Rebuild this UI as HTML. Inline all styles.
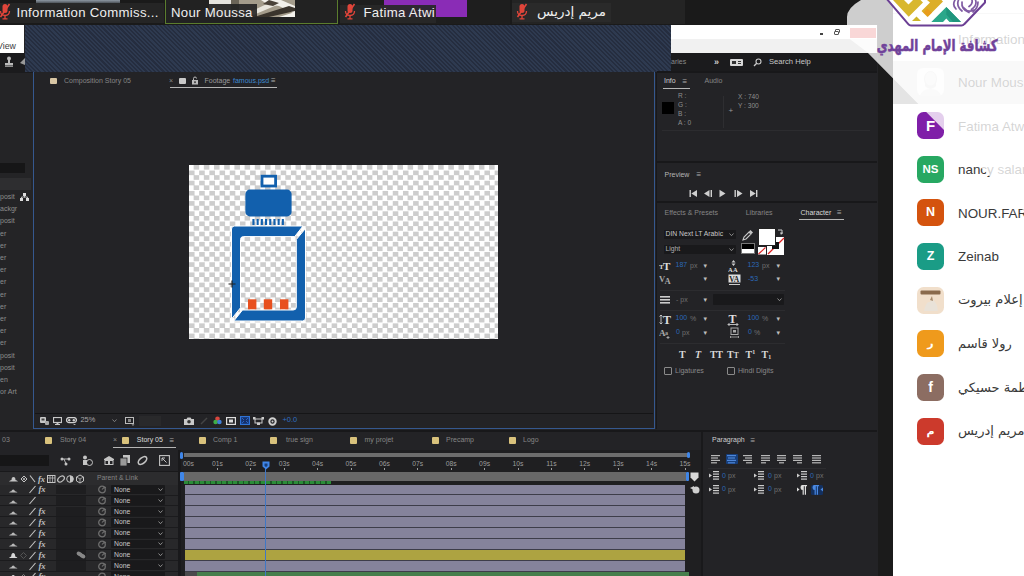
<!DOCTYPE html>
<html><head><meta charset="utf-8"><title>screen</title>
<style>
*{margin:0;padding:0;box-sizing:border-box}
html,body{width:1024px;height:576px;overflow:hidden;background:#232326;font-family:"Liberation Sans","DejaVu Sans",sans-serif}
.a{position:absolute;display:block}
.t{position:absolute;white-space:nowrap;line-height:1.15}
svg{overflow:hidden}
#root{position:relative;width:1024px;height:576px;overflow:hidden;background:#232326}
</style></head><body>
<div id="root">
<div class="a" style="left:0px;top:0px;width:1024px;height:25px;background:#1a1a1a;"></div>
<div class="a" style="left:36px;top:0px;width:84px;height:8px;background:linear-gradient(#8e99a4,#4a4f55 40%,#2a2a2b);"></div>
<div class="a" style="left:0px;top:2.5px;width:164px;height:20px;background:rgba(38,38,38,.92);"></div>
<div class="t" style="left:16.5px;top:5.11px;font-size:13.2px;color:#efefef;letter-spacing:.3px">Information Commiss...</div>
<div class="a" style="left:165px;top:-2px;width:172.5px;height:25.5px;background:#222;border:1.6px solid #5b7d2e"></div>
<svg class="a" style="left:208.5px;top:0" width="86" height="17" viewBox="0 0 86 17"><rect width="86" height="17" fill="#a49c8b"/><path d="M0 0h22v4H0z" fill="#e6e4de"/><path d="M30 17L60 3l8 2-28 12z" fill="#e9e6dd"/><path d="M52 0h20l14 6v8L70 6 58 4z" fill="#f2f0ea"/><path d="M45 17l35-11 6 2v3L60 17z" fill="#3a342c"/><path d="M60 0l10 3-6 3-10-2z" fill="#4a4238"/><path d="M70 17l16-5v5z" fill="#f4f2ec"/><path d="M22 0h8v10l-8 3z" fill="#6b6558"/></svg>
<div class="a" style="left:167px;top:4px;width:90px;height:18px;background:rgba(34,34,34,.9);"></div>
<div class="t" style="left:171px;top:5.11px;font-size:13.2px;color:#efefef;letter-spacing:.3px">Nour Moussa</div>
<div class="a" style="left:340px;top:0px;width:170px;height:24px;background:#1e1e1e;"></div>
<div class="a" style="left:384px;top:0px;width:83px;height:17px;background:#8a2cb6;"></div>
<div class="a" style="left:340px;top:4.5px;width:95.5px;height:18px;background:rgba(40,40,40,.93);"></div>
<div class="t" style="left:363.5px;top:5.11px;font-size:13.2px;color:#efefef;letter-spacing:.3px">Fatima Atwi</div>
<div class="a" style="left:512px;top:0px;width:173px;height:24px;background:#242424;"></div>
<div class="a" style="left:512px;top:2.5px;width:99px;height:19.5px;background:#2a2a2a;"></div>
<div class="t" style="left:537px;top:4.24px;font-size:13.5px;color:#efefef;font-family:'DejaVu Sans',sans-serif;direction:rtl">مريم إدريس</div>
<svg class="a" style="left:-1px;top:3px" width="12" height="18" viewBox="0 0 12 18"><rect x="3.5" y="1" width="5" height="9" rx="2.5" fill="#e0453a"/><path d="M1.5 8 Q1.5 12.5 6 12.5 Q10.5 12.5 10.5 8" fill="none" stroke="#e0453a" stroke-width="1.3"/><path d="M6 12.5V15.5M3.5 15.8H8.5" stroke="#e0453a" stroke-width="1.3"/><path d="M10.5 1L1.5 14" stroke="#e0453a" stroke-width="1.6"/></svg>
<svg class="a" style="left:344px;top:3px" width="12" height="18" viewBox="0 0 12 18"><rect x="3.5" y="1" width="5" height="9" rx="2.5" fill="#e0453a"/><path d="M1.5 8 Q1.5 12.5 6 12.5 Q10.5 12.5 10.5 8" fill="none" stroke="#e0453a" stroke-width="1.3"/><path d="M6 12.5V15.5M3.5 15.8H8.5" stroke="#e0453a" stroke-width="1.3"/><path d="M10.5 1L1.5 14" stroke="#e0453a" stroke-width="1.6"/></svg>
<svg class="a" style="left:516px;top:3px" width="12" height="18" viewBox="0 0 12 18"><rect x="3.5" y="1" width="5" height="9" rx="2.5" fill="#e0453a"/><path d="M1.5 8 Q1.5 12.5 6 12.5 Q10.5 12.5 10.5 8" fill="none" stroke="#e0453a" stroke-width="1.3"/><path d="M6 12.5V15.5M3.5 15.8H8.5" stroke="#e0453a" stroke-width="1.3"/><path d="M10.5 1L1.5 14" stroke="#e0453a" stroke-width="1.6"/></svg>
<div class="a" style="left:0px;top:25px;width:24px;height:28px;background:#fff;"></div>
<div class="t" style="left:-3px;top:41.44px;font-size:8.8px;color:#3c3c3c;">View</div>
<div class="a" style="left:0px;top:53px;width:877px;height:20px;background:#1b1b1d;"></div>
<div class="a" style="left:668px;top:25px;width:209px;height:14px;background:#fff;"></div>
<div class="a" style="left:668px;top:39px;width:209px;height:14px;background:#f1f1f1;"></div>
<div class="a" style="left:820px;top:33px;width:3px;height:1.5px;background:#444;"></div>
<div class="a" style="left:835px;top:29px;width:5px;height:4px;background:transparent;border:1px solid #555;border-radius:1px"></div>
<div class="a" style="left:834px;top:31px;width:5px;height:4px;background:#fff;border:1px solid #555;border-radius:1px"></div>
<div class="a" style="left:850px;top:27.5px;width:25.5px;height:10px;background:#e04343;"></div>
<svg class="a" style="left:2px;top:55px" width="24" height="14" viewBox="0 0 24 14"><circle cx="7" cy="3.5" r="2" fill="#bbb"/><path d="M6 5h2v3h3v2H3V8h3z" fill="#bbb"/><rect x="3" y="10.5" width="8" height="1.2" fill="#bbb"/><path d="M18 8l5-5v7z" fill="#999"/></svg>
<div class="t" style="left:671px;top:58.48px;font-size:7px;color:#8a8a8a;">aries</div>
<div class="t" style="left:714px;top:56.83px;font-size:9px;color:#cfcfcf;font-weight:bold">»</div>
<div class="a" style="left:730px;top:59px;width:13px;height:7px;background:#d8d8d8;border-radius:1px"></div>
<div class="a" style="left:732px;top:61px;width:4px;height:3px;background:#333;"></div>
<div class="a" style="left:738px;top:61px;width:3px;height:1px;background:#333;"></div>
<div class="a" style="left:738px;top:63px;width:3px;height:1px;background:#333;"></div>
<svg class="a" style="left:753px;top:58px" width="9" height="9" viewBox="0 0 9 9"><circle cx="5.5" cy="3.5" r="2.5" fill="none" stroke="#ccc" stroke-width="1.1"/><path d="M3.7 5.3L1 8" stroke="#ccc" stroke-width="1.3"/></svg>
<div class="t" style="left:769px;top:58.13px;font-size:7.6px;color:#c8c8c8;">Search Help</div>
<div class="a" style="left:0px;top:73px;width:33px;height:359px;background:#242426;"></div>
<div class="a" style="left:0px;top:163px;width:25px;height:10px;background:#161617;"></div>
<div class="a" style="left:0px;top:178px;width:31px;height:12px;background:#2e2e30;"></div>
<div class="t" style="left:0px;top:192.97px;font-size:7px;color:#8c8c8c;">posit</div>
<div class="t" style="left:0px;top:205.17px;font-size:7px;color:#8c8c8c;">ackgr</div>
<div class="t" style="left:0px;top:217.38px;font-size:7px;color:#8c8c8c;">posit</div>
<div class="t" style="left:0px;top:229.57px;font-size:7px;color:#8c8c8c;">er</div>
<div class="t" style="left:0px;top:241.78px;font-size:7px;color:#8c8c8c;">er</div>
<div class="t" style="left:0px;top:253.97px;font-size:7px;color:#8c8c8c;">er</div>
<div class="t" style="left:0px;top:266.18px;font-size:7px;color:#8c8c8c;">er</div>
<div class="t" style="left:0px;top:278.38px;font-size:7px;color:#8c8c8c;">er</div>
<div class="t" style="left:0px;top:290.58px;font-size:7px;color:#8c8c8c;">er</div>
<div class="t" style="left:0px;top:302.78px;font-size:7px;color:#8c8c8c;">er</div>
<div class="t" style="left:0px;top:314.98px;font-size:7px;color:#8c8c8c;">er</div>
<div class="t" style="left:0px;top:327.18px;font-size:7px;color:#8c8c8c;">er</div>
<div class="t" style="left:0px;top:339.38px;font-size:7px;color:#8c8c8c;">er</div>
<div class="t" style="left:0px;top:351.58px;font-size:7px;color:#8c8c8c;">posit</div>
<div class="t" style="left:0px;top:363.77px;font-size:7px;color:#8c8c8c;">posit</div>
<div class="t" style="left:0px;top:375.98px;font-size:7px;color:#8c8c8c;">en</div>
<div class="t" style="left:0px;top:388.18px;font-size:7px;color:#8c8c8c;">or Art</div>
<svg class="a" style="left:20px;top:193px" width="9" height="8" viewBox="0 0 9 8"><rect x="3" y="0" width="3" height="3" fill="#ddd"/><rect x="0" y="5" width="3" height="3" fill="#ddd"/><rect x="6" y="5" width="3" height="3" fill="#ddd"/><path d="M4.5 3v1.5M1.5 5V4h6v1" stroke="#ddd" fill="none" stroke-width=".8"/></svg>
<div class="a" style="left:32.7px;top:71px;width:622px;height:357.8px;background:#232326;border:1.7px solid #35588f"></div>
<div class="a" style="left:24.5px;top:24.7px;width:646.5px;height:47.5px;background:repeating-linear-gradient(45deg,#2e3a50 0,#2e3a50 1.5px,#252d3f 1.5px,#252d3f 3px);"></div>
<div class="a" style="left:35px;top:413px;width:618px;height:1px;background:#151517;"></div>
<div class="a" style="left:50px;top:77.5px;width:6.5px;height:6.5px;background:#d8c6a4;border-radius:1px"></div>
<div class="t" style="left:64px;top:76.97px;font-size:7px;color:#858585;">Composition Story 05</div>
<div class="t" style="left:169px;top:76.97px;font-size:7px;color:#888;">×</div>
<div class="a" style="left:179px;top:77.5px;width:6.5px;height:6.5px;background:#c9c9c9;border-radius:1px"></div>
<svg class="a" style="left:191px;top:76px" width="8" height="9" viewBox="0 0 8 9"><rect x="1" y="4" width="6" height="4.5" fill="#bbb"/><path d="M2.5 4V2.5a1.5 1.5 0 0 1 3 0" fill="none" stroke="#bbb" stroke-width="1"/><rect x="3.3" y="5.3" width="1.4" height="1.8" fill="#222"/></svg>
<div class="t" style="left:204.5px;top:76.97px;font-size:7px;color:#9a9a9a;">Footage</div>
<div class="t" style="left:233px;top:76.97px;font-size:7px;color:#3d8ad0;">famous.psd</div>
<div class="t" style="left:271px;top:76.4px;font-size:8px;color:#aaa;">≡</div>
<div class="a" style="left:170px;top:87.3px;width:107px;height:1.2px;background:#b5b5b5;"></div>
<div class="a" style="left:189px;top:165px;width:309.2px;height:173.5px;background:repeating-conic-gradient(#cdcdcd 0 25%,#fff 0 50%) 0 0/10.2px 10.2px"></div>
<svg class="a" style="left:189px;top:165px" width="309" height="174" viewBox="189 165 309 174">
<rect x="262" y="176.2" width="13.6" height="9.8" fill="#fff" stroke="#1260ad" stroke-width="2.8"/>
<rect x="245.4" y="189.6" width="46.2" height="26.8" rx="4.5" fill="#1260ad"/>
<g fill="#1260ad"><rect x="252.4" y="219" width="2.1" height="6" /><rect x="256.6" y="219" width="2.1" height="6" /><rect x="260.8" y="219" width="2.1" height="6" /><rect x="265.0" y="219" width="2.1" height="6" /><rect x="269.2" y="219" width="2.1" height="6" /><rect x="273.4" y="219" width="2.1" height="6" /><rect x="277.6" y="219" width="2.1" height="6" /><rect x="281.8" y="219" width="2.1" height="6" /></g>
<path d="M234.5 226h68.5l-8.3 10.6h-51.2q-3 0-3 3v68.2l-9 11.2v-90q0-3 3-3z" fill="#1260ad" stroke="#fff" stroke-width="1"/>
<path d="M305.5 228.5v89.5q0 3-3 3h-68.7l8.7-11h50.8q3 0 3-3v-67.5z" fill="#1260ad" stroke="#fff" stroke-width="1"/>
<g fill="#e8501e"><rect x="248" y="299.3" width="8.4" height="10"/><rect x="263.8" y="299.3" width="8.4" height="10"/><rect x="280" y="299.3" width="8.4" height="10"/></g>
<path d="M232 280.5v7M228.5 284h7" stroke="#222" stroke-width="1.2"/>
</svg>
<svg class="a" style="left:40px;top:416.5px" width="9" height="8" viewBox="0 0 9 8"><rect x="0" y="0" width="6" height="6" rx="1" fill="#c8c8c8"/><rect x="1.5" y="1.5" width="3" height="2" fill="#444"/><rect x="5" y="4" width="4" height="4" rx="1" fill="#aaa"/></svg>
<svg class="a" style="left:53px;top:416.5px" width="9" height="8" viewBox="0 0 9 8"><rect x=".5" y=".5" width="8" height="5" fill="none" stroke="#c8c8c8" stroke-width="1.2"/><rect x="3.5" y="5.5" width="2" height="1.5" fill="#c8c8c8"/><rect x="2" y="7" width="5" height="1" fill="#c8c8c8"/></svg>
<svg class="a" style="left:66px;top:416.5px" width="11" height="8" viewBox="0 0 11 8"><rect x=".6" y=".6" width="9.8" height="5" rx="2.5" fill="none" stroke="#d0d0d0" stroke-width="1.3"/><circle cx="3.2" cy="3.2" r="1.2" fill="#d0d0d0"/><circle cx="7.8" cy="3.2" r="1.2" fill="#d0d0d0"/><path d="M7 7h3l-1.5 1z" fill="#ccc"/></svg>
<div class="t" style="left:80.5px;top:416.25px;font-size:7.4px;color:#a8a8a8;">25%</div>
<svg class="a" style="left:112px;top:419px" width="5" height="3.5" viewBox="0 0 5 3.5"><path d="M.5 .5L2.5 2.7 4.5 .5" fill="none" stroke="#888" stroke-width=".9"/></svg>
<svg class="a" style="left:125px;top:416.5px" width="10" height="9" viewBox="0 0 10 9"><rect x=".5" y=".5" width="8" height="6" fill="none" stroke="#bbb" stroke-width="1"/><rect x="3" y="2" width="3" height="3" fill="#888"/><path d="M6.5 7.5h3l-1.5 1.2z" fill="#ccc"/></svg>
<div class="a" style="left:139px;top:415.5px;width:22px;height:10px;background:#29292b;"></div>
<svg class="a" style="left:184px;top:416.5px" width="10" height="8" viewBox="0 0 10 8"><path d="M0 2h2.5l1-1.5h3l1 1.5H10v6H0z" fill="#c8c8c8"/><circle cx="5" cy="4.8" r="1.8" fill="#333"/></svg>
<svg class="a" style="left:200px;top:416.5px" width="8" height="8" viewBox="0 0 8 8"><path d="M1 7L7 1" stroke="#444" stroke-width="1.5"/></svg>
<svg class="a" style="left:213px;top:415.5px" width="9" height="10" viewBox="0 0 9 10"><circle cx="4.5" cy="2.8" r="2.3" fill="#d9463e"/><circle cx="2.6" cy="6" r="2.3" fill="#3fae49"/><circle cx="6.4" cy="6" r="2.3" fill="#3f7fd9"/></svg>
<svg class="a" style="left:226px;top:416.5px" width="10" height="8" viewBox="0 0 10 8"><rect x=".6" y=".6" width="8.8" height="6.8" fill="none" stroke="#ddd" stroke-width="1.2"/><rect x="3" y="2.5" width="4" height="3" fill="#ddd"/></svg>
<svg class="a" style="left:240px;top:416px" width="10" height="9" viewBox="0 0 10 9"><rect x=".6" y=".6" width="8.8" height="7.8" fill="#16306a" stroke="#2f74d8" stroke-width="1.2"/><path d="M2 2l2 2M8 2l-2 2M2 7l2-2M8 7l-2-2" stroke="#2f74d8" stroke-width=".8"/></svg>
<svg class="a" style="left:253px;top:417px" width="11" height="8" viewBox="0 0 11 8"><rect x="2" y="2" width="7" height="4" fill="none" stroke="#ccc" stroke-width="1"/><rect x="0" y="0" width="2.5" height="2.5" fill="#ccc"/><rect x="8.5" y="0" width="2.5" height="2.5" fill="#ccc"/><rect x="4" y="5.5" width="3" height="2.5" fill="#ccc"/></svg>
<svg class="a" style="left:268px;top:416.5px" width="9" height="9" viewBox="0 0 9 9"><circle cx="4.5" cy="4.5" r="3.2" fill="none" stroke="#d0d0d0" stroke-width="2"/><circle cx="4.5" cy="4.5" r="1" fill="#d0d0d0"/></svg>
<div class="t" style="left:282.5px;top:416.25px;font-size:7.4px;color:#2f6fc4;">+0.0</div>
<div class="a" style="left:657px;top:71px;width:220px;height:2px;background:#18181a;"></div>
<div class="a" style="left:655.5px;top:73px;width:1.5px;height:356px;background:#18181a;"></div>
<div class="t" style="left:664px;top:77.17px;font-size:7px;color:#cdcdcd;">Info</div>
<div class="t" style="left:682.5px;top:76.6px;font-size:8px;color:#aaa;">≡</div>
<div class="a" style="left:663px;top:87.7px;width:27px;height:1.2px;background:#b5b5b5;"></div>
<div class="t" style="left:704.5px;top:77.17px;font-size:7px;color:#858585;">Audio</div>
<div class="a" style="left:661.5px;top:101.5px;width:12.5px;height:12px;background:#000;"></div>
<div class="t" style="left:678px;top:92.41px;font-size:6.6px;color:#8e8e8e;">R :</div>
<div class="t" style="left:678px;top:101.2px;font-size:6.6px;color:#8e8e8e;">G :</div>
<div class="t" style="left:678px;top:110.01px;font-size:6.6px;color:#8e8e8e;">B :</div>
<div class="t" style="left:678px;top:118.81px;font-size:6.6px;color:#8e8e8e;">A :  0</div>
<div class="a" style="left:722.5px;top:96px;width:1px;height:32px;background:#2e2e31;"></div>
<div class="t" style="left:728.5px;top:105.9px;font-size:8px;color:#999;">+</div>
<div class="t" style="left:738px;top:92.7px;font-size:6.6px;color:#8e8e8e;">X : 740</div>
<div class="t" style="left:738px;top:101.5px;font-size:6.6px;color:#8e8e8e;">Y : 300</div>
<div class="a" style="left:662px;top:129.5px;width:208px;height:1px;background:#2c2c2f;"></div>
<div class="a" style="left:657px;top:161px;width:220px;height:2px;background:#18181a;"></div>
<div class="t" style="left:664.5px;top:170.67px;font-size:7px;color:#b5b5b5;">Preview</div>
<div class="t" style="left:696.5px;top:170.1px;font-size:8px;color:#aaa;">≡</div>
<svg class="a" style="left:688px;top:188.5px" width="72" height="9" viewBox="0 0 72 9"><g fill="#cfcfcf"><rect x="1.5" y="1" width="1.4" height="7"/><path d="M9 1v7L3.3 4.5z"/><path d="M21.5 1v7L16 4.5z"/><rect x="22.6" y="1" width="1.4" height="7"/><path d="M31.5 .8v7.4L37.5 4.5z"/><rect x="46.5" y="1" width="1.4" height="7"/><path d="M49 1v7L54.5 4.5z"/><path d="M62 1v7L67.7 4.5z"/><rect x="68" y="1" width="1.4" height="7"/></g></svg>
<div class="a" style="left:657px;top:200.8px;width:220px;height:2px;background:#18181a;"></div>
<div class="t" style="left:664.5px;top:208.97px;font-size:7px;color:#858585;">Effects &amp; Presets</div>
<div class="t" style="left:745.7px;top:208.97px;font-size:7px;color:#858585;">Libraries</div>
<div class="t" style="left:800.5px;top:208.97px;font-size:7px;color:#d8d8d8;">Character</div>
<div class="t" style="left:837px;top:208.4px;font-size:8px;color:#aaa;">≡</div>
<div class="a" style="left:799px;top:219.3px;width:45px;height:1.2px;background:#b5b5b5;"></div>
<div class="a" style="left:663.5px;top:229.5px;width:72.5px;height:9.5px;background:#19191b;border-radius:1px"></div>
<div class="t" style="left:665.5px;top:230.39px;font-size:6.8px;color:#c8c8c8;">DIN Next LT Arabic</div>
<svg class="a" style="left:729px;top:232.5px" width="5" height="3.5" viewBox="0 0 5 3.5"><path d="M.5 .5L2.5 2.7 4.5 .5" fill="none" stroke="#999" stroke-width=".9"/></svg>
<div class="a" style="left:663.5px;top:244.5px;width:72.5px;height:9.5px;background:#19191b;border-radius:1px"></div>
<div class="t" style="left:665.5px;top:245.39px;font-size:6.8px;color:#b0b0b0;">Light</div>
<svg class="a" style="left:729px;top:247.5px" width="5" height="3.5" viewBox="0 0 5 3.5"><path d="M.5 .5L2.5 2.7 4.5 .5" fill="none" stroke="#999" stroke-width=".9"/></svg>
<svg class="a" style="left:741px;top:228.5px" width="13" height="13" viewBox="0 0 13 13"><path d="M2 11l1-3 5-5 2 2-5 5z" fill="none" stroke="#c8c8c8" stroke-width="1.1"/><path d="M8 2.5l1.5-1.5 2.5 2.5-1.5 1.5z" fill="#c8c8c8"/></svg>
<div class="a" style="left:766.5px;top:236.5px;width:17.5px;height:18px;background:#fff;"></div>
<svg class="a" style="left:766.5px;top:236.5px" width="18" height="18" viewBox="0 0 18 18"><path d="M1 17L17 1" stroke="#d22" stroke-width="1.3"/><rect x="5" y="5" width="7" height="7" fill="#111"/></svg>
<div class="a" style="left:757.5px;top:227.5px;width:18.5px;height:18.5px;background:#fff;border:1px solid #222"></div>
<svg class="a" style="left:776.5px;top:227.5px" width="8" height="9" viewBox="0 0 8 9"><path d="M1 2h4v4" fill="none" stroke="#ccc" stroke-width="1"/><path d="M4 7l2-2.5h-3z" fill="#ccc"/></svg>
<div class="a" style="left:741px;top:243px;width:13.5px;height:5.5px;background:#000;"></div>
<div class="a" style="left:741px;top:248.5px;width:13.5px;height:5.5px;background:#fff;"></div>
<div class="a" style="left:741px;top:243px;width:13.5px;height:11px;background:transparent;border:1px solid #777"></div>
<svg class="a" style="left:757.5px;top:247.3px" width="8" height="8" viewBox="0 0 8 8"><rect width="8" height="7.5" fill="#fff"/><path d="M.5 7L7.5 .5" stroke="#d22" stroke-width="1.1"/></svg>
<svg class="a" style="left:659px;top:260px" width="13" height="11" viewBox="0 0 13 11"><text x="0" y="9" font-family="Liberation Serif" font-size="7" font-weight="bold" fill="#ddd">T</text><text x="4" y="10" font-family="Liberation Serif" font-size="11" font-weight="bold" fill="#ddd">T</text></svg>
<div class="t" style="left:675.5px;top:261.18px;font-size:7px;color:#2b68b8;">187</div>
<div class="t" style="left:690px;top:261.58px;font-size:7px;color:#707070;">px</div>
<div class="t" style="left:703.5px;top:261.98px;font-size:7px;color:#bdbdbd;">▾</div>
<svg class="a" style="left:728px;top:259.5px" width="11" height="12" viewBox="0 0 11 12"><path d="M5.5 0l2 2.5h-4z M5.5 6l-2-2.5h4z" fill="#ccc"/><text x="0" y="11.5" font-family="Liberation Serif" font-size="6.5" font-weight="bold" fill="#ddd">A</text><text x="5" y="11.5" font-family="Liberation Serif" font-size="6.5" font-weight="bold" fill="#ddd">A</text></svg>
<div class="t" style="left:747.5px;top:261.18px;font-size:7px;color:#2b68b8;">123</div>
<div class="t" style="left:762px;top:261.58px;font-size:7px;color:#707070;">px</div>
<div class="t" style="left:776.5px;top:261.98px;font-size:7px;color:#bdbdbd;">▾</div>
<svg class="a" style="left:659px;top:274px" width="13" height="11" viewBox="0 0 13 11"><text x="0" y="8" font-family="Liberation Serif" font-size="8.5" font-weight="bold" fill="#aaa">V</text><text x="5.5" y="10" font-family="Liberation Serif" font-size="8.5" font-weight="bold" fill="#aaa">A</text></svg>
<div class="t" style="left:703.5px;top:275.48px;font-size:7px;color:#bdbdbd;">▾</div>
<svg class="a" style="left:727.5px;top:273.5px" width="13" height="11" viewBox="0 0 13 11"><rect x=".5" y=".5" width="12" height="8" fill="#ddd"/><text x="1.2" y="7.5" font-family="Liberation Serif" font-size="7.5" font-weight="bold" fill="#222">VA</text><path d="M1 10.5h11" stroke="#ccc" stroke-width="1"/></svg>
<div class="t" style="left:748px;top:274.98px;font-size:7px;color:#2b68b8;">-53</div>
<div class="t" style="left:776.5px;top:275.48px;font-size:7px;color:#bdbdbd;">▾</div>
<div class="a" style="left:660px;top:289.5px;width:125px;height:1px;background:#2c2c2f;"></div>
<svg class="a" style="left:660px;top:295.5px" width="10" height="9" viewBox="0 0 10 9"><rect y="0" width="10" height="1.6" fill="#ccc"/><rect y="3" width="10" height="1.6" fill="#ccc"/><rect y="6" width="10" height="1.6" fill="#ccc"/></svg>
<div class="t" style="left:676px;top:295.68px;font-size:7px;color:#707070;">-  px</div>
<div class="t" style="left:703.5px;top:295.98px;font-size:7px;color:#bdbdbd;">▾</div>
<div class="a" style="left:712.5px;top:294px;width:71.5px;height:11px;background:#19191b;border-radius:1px"></div>
<svg class="a" style="left:777px;top:298px" width="5" height="3.5" viewBox="0 0 5 3.5"><path d="M.5 .5L2.5 2.7 4.5 .5" fill="none" stroke="#999" stroke-width=".9"/></svg>
<div class="a" style="left:660px;top:310px;width:125px;height:1px;background:#2c2c2f;"></div>
<svg class="a" style="left:659px;top:313px" width="14" height="12" viewBox="0 0 14 12"><text x="4" y="11" font-family="Liberation Serif" font-size="12" font-weight="bold" fill="#ddd">T</text><path d="M2 2v9M.5 3.5L2 2l1.5 1.5M.5 9.5L2 11l1.5-1.5" stroke="#ccc" stroke-width=".9" fill="none"/></svg>
<div class="t" style="left:675.5px;top:314.48px;font-size:7px;color:#2b68b8;">100</div>
<div class="t" style="left:690px;top:314.88px;font-size:7px;color:#707070;">%</div>
<div class="t" style="left:703.5px;top:315.28px;font-size:7px;color:#bdbdbd;">▾</div>
<svg class="a" style="left:727px;top:313px" width="13" height="13" viewBox="0 0 13 13"><text x="1.5" y="9.5" font-family="Liberation Serif" font-size="12" font-weight="bold" fill="#ddd">T</text><path d="M1 11.5h10M2.5 10L1 11.5 2.5 13M9.5 10L11 11.5 9.5 13" stroke="#ccc" stroke-width=".9" fill="none"/></svg>
<div class="t" style="left:747.5px;top:314.48px;font-size:7px;color:#2b68b8;">100</div>
<div class="t" style="left:762px;top:314.88px;font-size:7px;color:#707070;">%</div>
<div class="t" style="left:776.5px;top:315.28px;font-size:7px;color:#bdbdbd;">▾</div>
<svg class="a" style="left:659px;top:327px" width="14" height="12" viewBox="0 0 14 12"><text x="0" y="9" font-family="Liberation Serif" font-size="9" font-weight="bold" fill="#aaa">A</text><text x="6" y="8" font-family="Liberation Serif" font-size="6" font-weight="bold" fill="#aaa">a</text><path d="M9 9v3M7.5 10.5h3" stroke="#aaa" stroke-width=".9"/></svg>
<div class="t" style="left:676px;top:328.48px;font-size:7px;color:#2b68b8;">0</div>
<div class="t" style="left:682px;top:328.88px;font-size:7px;color:#707070;">px</div>
<div class="t" style="left:703.5px;top:329.28px;font-size:7px;color:#bdbdbd;">▾</div>
<svg class="a" style="left:729px;top:327px" width="11" height="12" viewBox="0 0 11 12"><rect x="2" y="1" width="7" height="6.5" fill="none" stroke="#aaa" stroke-width="1"/><path d="M4 3h3v2.5H4z" fill="#aaa"/><path d="M1 10h9M2 9l-1 1 1 1M9 9l1 1-1 1" stroke="#aaa" stroke-width=".8" fill="none"/></svg>
<div class="t" style="left:748px;top:328.48px;font-size:7px;color:#2b68b8;">0</div>
<div class="t" style="left:754px;top:328.88px;font-size:7px;color:#707070;">%</div>
<div class="t" style="left:776.5px;top:329.28px;font-size:7px;color:#bdbdbd;">▾</div>
<div class="a" style="left:660px;top:343px;width:125px;height:1px;background:#2c2c2f;"></div>
<div class="t" style="left:679px;top:348.5px;font-size:10px;color:#d8d8d8;font-family:'Liberation Serif',serif;font-weight:bold;">T</div>
<div class="t" style="left:695px;top:348.5px;font-size:10px;color:#d8d8d8;font-family:'Liberation Serif',serif;font-weight:bold;font-style:italic">T</div>
<div class="t" style="left:710px;top:348.5px;font-size:10px;color:#d8d8d8;font-family:'Liberation Serif',serif;font-weight:bold;letter-spacing:-.3px">TT</div>
<div class="t" style="left:727px;top:348.5px;font-size:10px;color:#d8d8d8;font-family:'Liberation Serif',serif;font-weight:bold;">T<span style="font-size:7.5px">T</span></div>
<div class="t" style="left:745.5px;top:348.5px;font-size:10px;color:#d8d8d8;font-family:'Liberation Serif',serif;font-weight:bold;">T<span style="font-size:6px;vertical-align:4px">1</span></div>
<div class="t" style="left:761.5px;top:348.5px;font-size:10px;color:#d8d8d8;font-family:'Liberation Serif',serif;font-weight:bold;">T<span style="font-size:6px;vertical-align:-1px">1</span></div>
<div class="a" style="left:663.5px;top:366.5px;width:8.5px;height:8.5px;background:transparent;border:1px solid #8a8a8a;border-radius:1px"></div>
<div class="t" style="left:675px;top:366.78px;font-size:7px;color:#8a8a8a;">Ligatures</div>
<div class="a" style="left:726.8px;top:366.5px;width:8.5px;height:8.5px;background:transparent;border:1px solid #8a8a8a;border-radius:1px"></div>
<div class="t" style="left:738px;top:366.78px;font-size:7px;color:#8a8a8a;">Hindi Digits</div>
<div class="a" style="left:0px;top:429.5px;width:877px;height:2.5px;background:#18181a;"></div>
<div class="a" style="left:0px;top:432px;width:877px;height:144px;background:#232326;"></div>
<div class="t" style="left:2px;top:436.28px;font-size:7px;color:#858585;">03</div>
<div class="a" style="left:45px;top:436.5px;width:7px;height:7px;background:#d9c27c;border-radius:1px"></div>
<div class="t" style="left:60px;top:436.28px;font-size:7px;color:#858585;">Story 04</div>
<div class="t" style="left:113px;top:436.28px;font-size:7px;color:#888;">×</div>
<div class="a" style="left:122px;top:436.5px;width:7px;height:7px;background:#d9c27c;border-radius:1px"></div>
<div class="t" style="left:136.8px;top:436.28px;font-size:7px;color:#dcdcdc;">Story 05</div>
<div class="t" style="left:169.5px;top:435.7px;font-size:8px;color:#aaa;">≡</div>
<div class="a" style="left:113px;top:446.8px;width:63px;height:1.2px;background:#b5b5b5;"></div>
<div class="a" style="left:199px;top:436.5px;width:7px;height:7px;background:#d9c27c;border-radius:1px"></div>
<div class="t" style="left:213px;top:436.28px;font-size:7px;color:#858585;">Comp 1</div>
<div class="a" style="left:270px;top:436.5px;width:7px;height:7px;background:#d9c27c;border-radius:1px"></div>
<div class="t" style="left:286px;top:436.28px;font-size:7px;color:#858585;">true sign</div>
<div class="a" style="left:350px;top:436.5px;width:7px;height:7px;background:#d9c27c;border-radius:1px"></div>
<div class="t" style="left:364.5px;top:436.28px;font-size:7px;color:#858585;">my projet</div>
<div class="a" style="left:432px;top:436.5px;width:7px;height:7px;background:#d9c27c;border-radius:1px"></div>
<div class="t" style="left:446px;top:436.28px;font-size:7px;color:#858585;">Precamp</div>
<div class="a" style="left:509px;top:436.5px;width:7px;height:7px;background:#d9c27c;border-radius:1px"></div>
<div class="t" style="left:523px;top:436.28px;font-size:7px;color:#858585;">Logo</div>
<div class="a" style="left:0px;top:455px;width:49px;height:10.5px;background:#161617;"></div>
<svg class="a" style="left:60px;top:455.5px" width="11" height="10" viewBox="0 0 11 10"><circle cx="2" cy="3" r="1.5" fill="#c4c4c4"/><circle cx="9" cy="3" r="1.5" fill="#c4c4c4"/><circle cx="6" cy="8" r="1.5" fill="#c4c4c4"/><path d="M2 3h7M4 3l2 5" stroke="#c4c4c4" stroke-width=".9" fill="none"/></svg>
<svg class="a" style="left:82px;top:454.5px" width="11" height="11" viewBox="0 0 11 11"><circle cx="3" cy="2.5" r="2" fill="#c4c4c4"/><path d="M1 5h4v5H1z" fill="#c4c4c4"/><circle cx="7.5" cy="7.5" r="3" fill="none" stroke="#c4c4c4" stroke-width="1"/></svg>
<svg class="a" style="left:104px;top:455px" width="10" height="10" viewBox="0 0 10 10"><path d="M0 4l5-3 5 3v1H0z" fill="#c4c4c4"/><rect x="1" y="5.5" width="8" height="4" fill="none" stroke="#c4c4c4" stroke-width="1"/><rect x="4" y="6" width="2" height="3" fill="#c4c4c4"/></svg>
<svg class="a" style="left:120px;top:454.5px" width="11" height="11" viewBox="0 0 11 11"><rect x="3" y="0" width="7" height="8" fill="#c4c4c4"/><rect x="0" y="3" width="7" height="8" fill="#999" stroke="#232326" stroke-width=".8"/></svg>
<svg class="a" style="left:137px;top:454.5px" width="11" height="11" viewBox="0 0 11 11"><ellipse cx="5.5" cy="5.5" rx="5" ry="2.8" transform="rotate(-40 5.5 5.5)" fill="none" stroke="#c4c4c4" stroke-width="1.6"/></svg>
<svg class="a" style="left:159px;top:454.5px" width="11" height="11" viewBox="0 0 11 11"><rect x=".6" y=".6" width="9.8" height="9.8" fill="none" stroke="#c4c4c4" stroke-width="1.1"/><path d="M3 3l4.5 4.5M3 3h3M3 3v3" stroke="#c4c4c4" stroke-width="1" fill="none"/></svg>
<div class="a" style="left:0px;top:472px;width:178px;height:12.5px;background:#2c2c2e;"></div>
<div class="a" style="left:0px;top:471px;width:178px;height:1px;background:#19191b;"></div>
<svg class="a" style="left:8px;top:473.5px" width="80" height="10" viewBox="0 0 80 10"><path d="M1 7.5h9q-1-1.5-2.5-1.5 0-3-2-3t-2 3Q2 6 1 7.5z" fill="#c4c4c4"/><path d="M16 2l3 3-3 3-3-3z" fill="none" stroke="#c4c4c4" stroke-width="1"/><circle cx="16" cy="5" r="1" fill="#c4c4c4"/><path d="M22 1.5l5 6.5" stroke="#c4c4c4" stroke-width="1.1"/><text x="30" y="8" font-family="Liberation Serif" font-style="italic" font-weight="bold" font-size="8.5" fill="#c4c4c4">fx</text><rect x="39.5" y="1.5" width="7.5" height="7" fill="none" stroke="#c4c4c4" stroke-width="1"/><path d="M39.5 4h7.5M42 1.5v7M44.5 1.5v7" stroke="#c4c4c4" stroke-width=".7"/><ellipse cx="53" cy="5" rx="3.8" ry="2.4" transform="rotate(-40 53 5)" fill="none" stroke="#c4c4c4" stroke-width="1.2"/><circle cx="62" cy="5" r="3.3" fill="none" stroke="#c4c4c4" stroke-width="1"/><path d="M62 1.7a3.3 3.3 0 0 1 0 6.6z" fill="#c4c4c4"/><path d="M72 1l3.5 2v4l-3.5 2-3.5-2V3z" fill="none" stroke="#c4c4c4" stroke-width="1"/><path d="M72 5v4M72 5l3.5-2M72 5l-3.5-2" stroke="#c4c4c4" stroke-width=".7"/></svg>
<div class="t" style="left:97px;top:474.29px;font-size:6.8px;color:#858585;">Parent &amp; Link</div>
<div class="a" style="left:0px;top:484.5px;width:178px;height:92px;background:#28282a;"></div>
<div class="a" style="left:0px;top:494.55px;width:178px;height:1px;background:#1b1b1d;"></div>
<div class="a" style="left:56px;top:484.75px;width:9.5px;height:9.5px;background:#1e1e20;"></div>
<div class="a" style="left:66px;top:484.75px;width:9.5px;height:9.5px;background:#1e1e20;"></div>
<div class="a" style="left:76px;top:484.75px;width:9.5px;height:9.5px;background:#1e1e20;"></div>
<svg class="a" style="left:8px;top:485.7px" width="10" height="8" viewBox="0 0 10 8"><path d="M1 6.5h8.5Q8 5.3 7 5.3 6.5 3.5 5.2 3.5T3.3 5.3Q2 5.3 1 6.5z" fill="#b8b8b8"/></svg>
<svg class="a" style="left:28px;top:485.2px" width="9" height="9" viewBox="0 0 9 9"><path d="M1.5 8L7.5 1" stroke="#c4c4c4" stroke-width="1.1"/></svg>
<div class="t" style="left:38.5px;top:485.2px;font-size:8.5px;color:#c0c0c0;font-family:'Liberation Serif',serif;font-style:italic;font-weight:bold">fx</div>
<svg class="a" style="left:96.5px;top:485.2px" width="10" height="9" viewBox="0 0 10 9"><circle cx="5" cy="4.5" r="3.3" fill="none" stroke="#6e6e6e" stroke-width="1.3"/><path d="M5 4.5q2-2.5 4-2" fill="none" stroke="#6e6e6e" stroke-width="1.1"/></svg>
<div class="a" style="left:111px;top:485.05px;width:54px;height:8.9px;background:#19191b;border-radius:1px"></div>
<div class="t" style="left:114px;top:485.79px;font-size:6.8px;color:#c8c8c8;">None</div>
<svg class="a" style="left:158px;top:487.9px" width="5" height="3.5" viewBox="0 0 5 3.5"><path d="M.5 .5L2.5 2.7 4.5 .5" fill="none" stroke="#999" stroke-width=".9"/></svg>
<div class="a" style="left:0px;top:505.45px;width:178px;height:1px;background:#1b1b1d;"></div>
<div class="a" style="left:56px;top:495.65px;width:9.5px;height:9.5px;background:#1e1e20;"></div>
<div class="a" style="left:66px;top:495.65px;width:9.5px;height:9.5px;background:#1e1e20;"></div>
<div class="a" style="left:76px;top:495.65px;width:9.5px;height:9.5px;background:#1e1e20;"></div>
<svg class="a" style="left:8px;top:496.6px" width="10" height="8" viewBox="0 0 10 8"><path d="M1 6.5h8.5Q8 5.3 7 5.3 6.5 3.5 5.2 3.5T3.3 5.3Q2 5.3 1 6.5z" fill="#b8b8b8"/></svg>
<svg class="a" style="left:28px;top:496.1px" width="9" height="9" viewBox="0 0 9 9"><path d="M1.5 8L7.5 1" stroke="#c4c4c4" stroke-width="1.1"/></svg>
<svg class="a" style="left:96.5px;top:496.1px" width="10" height="9" viewBox="0 0 10 9"><circle cx="5" cy="4.5" r="3.3" fill="none" stroke="#6e6e6e" stroke-width="1.3"/><path d="M5 4.5q2-2.5 4-2" fill="none" stroke="#6e6e6e" stroke-width="1.1"/></svg>
<div class="a" style="left:111px;top:495.95px;width:54px;height:8.9px;background:#19191b;border-radius:1px"></div>
<div class="t" style="left:114px;top:496.69px;font-size:6.8px;color:#c8c8c8;">None</div>
<svg class="a" style="left:158px;top:498.8px" width="5" height="3.5" viewBox="0 0 5 3.5"><path d="M.5 .5L2.5 2.7 4.5 .5" fill="none" stroke="#999" stroke-width=".9"/></svg>
<div class="a" style="left:0px;top:516.35px;width:178px;height:1px;background:#1b1b1d;"></div>
<div class="a" style="left:56px;top:506.55px;width:9.5px;height:9.5px;background:#1e1e20;"></div>
<div class="a" style="left:66px;top:506.55px;width:9.5px;height:9.5px;background:#1e1e20;"></div>
<div class="a" style="left:76px;top:506.55px;width:9.5px;height:9.5px;background:#1e1e20;"></div>
<svg class="a" style="left:8px;top:507.5px" width="10" height="8" viewBox="0 0 10 8"><path d="M1 6.5h8.5Q8 5.3 7 5.3 6.5 3.5 5.2 3.5T3.3 5.3Q2 5.3 1 6.5z" fill="#b8b8b8"/></svg>
<svg class="a" style="left:28px;top:507.0px" width="9" height="9" viewBox="0 0 9 9"><path d="M1.5 8L7.5 1" stroke="#c4c4c4" stroke-width="1.1"/></svg>
<div class="t" style="left:38.5px;top:507px;font-size:8.5px;color:#c0c0c0;font-family:'Liberation Serif',serif;font-style:italic;font-weight:bold">fx</div>
<svg class="a" style="left:96.5px;top:507.0px" width="10" height="9" viewBox="0 0 10 9"><circle cx="5" cy="4.5" r="3.3" fill="none" stroke="#6e6e6e" stroke-width="1.3"/><path d="M5 4.5q2-2.5 4-2" fill="none" stroke="#6e6e6e" stroke-width="1.1"/></svg>
<div class="a" style="left:111px;top:506.85px;width:54px;height:8.9px;background:#19191b;border-radius:1px"></div>
<div class="t" style="left:114px;top:507.59px;font-size:6.8px;color:#c8c8c8;">None</div>
<svg class="a" style="left:158px;top:509.7px" width="5" height="3.5" viewBox="0 0 5 3.5"><path d="M.5 .5L2.5 2.7 4.5 .5" fill="none" stroke="#999" stroke-width=".9"/></svg>
<div class="a" style="left:0px;top:527.25px;width:178px;height:1px;background:#1b1b1d;"></div>
<div class="a" style="left:56px;top:517.45px;width:9.5px;height:9.5px;background:#1e1e20;"></div>
<div class="a" style="left:66px;top:517.45px;width:9.5px;height:9.5px;background:#1e1e20;"></div>
<div class="a" style="left:76px;top:517.45px;width:9.5px;height:9.5px;background:#1e1e20;"></div>
<svg class="a" style="left:8px;top:518.4px" width="10" height="8" viewBox="0 0 10 8"><path d="M1 6.5h8.5Q8 5.3 7 5.3 6.5 3.5 5.2 3.5T3.3 5.3Q2 5.3 1 6.5z" fill="#b8b8b8"/></svg>
<svg class="a" style="left:28px;top:517.9px" width="9" height="9" viewBox="0 0 9 9"><path d="M1.5 8L7.5 1" stroke="#c4c4c4" stroke-width="1.1"/></svg>
<div class="t" style="left:38.5px;top:517.9px;font-size:8.5px;color:#c0c0c0;font-family:'Liberation Serif',serif;font-style:italic;font-weight:bold">fx</div>
<svg class="a" style="left:96.5px;top:517.9px" width="10" height="9" viewBox="0 0 10 9"><circle cx="5" cy="4.5" r="3.3" fill="none" stroke="#6e6e6e" stroke-width="1.3"/><path d="M5 4.5q2-2.5 4-2" fill="none" stroke="#6e6e6e" stroke-width="1.1"/></svg>
<div class="a" style="left:111px;top:517.75px;width:54px;height:8.9px;background:#19191b;border-radius:1px"></div>
<div class="t" style="left:114px;top:518.49px;font-size:6.8px;color:#c8c8c8;">None</div>
<svg class="a" style="left:158px;top:520.6px" width="5" height="3.5" viewBox="0 0 5 3.5"><path d="M.5 .5L2.5 2.7 4.5 .5" fill="none" stroke="#999" stroke-width=".9"/></svg>
<div class="a" style="left:0px;top:538.15px;width:178px;height:1px;background:#1b1b1d;"></div>
<div class="a" style="left:56px;top:528.35px;width:9.5px;height:9.5px;background:#1e1e20;"></div>
<div class="a" style="left:66px;top:528.35px;width:9.5px;height:9.5px;background:#1e1e20;"></div>
<div class="a" style="left:76px;top:528.35px;width:9.5px;height:9.5px;background:#1e1e20;"></div>
<svg class="a" style="left:8px;top:529.3px" width="10" height="8" viewBox="0 0 10 8"><path d="M1 6.5h8.5Q8 5.3 7 5.3 6.5 3.5 5.2 3.5T3.3 5.3Q2 5.3 1 6.5z" fill="#b8b8b8"/></svg>
<svg class="a" style="left:28px;top:528.8px" width="9" height="9" viewBox="0 0 9 9"><path d="M1.5 8L7.5 1" stroke="#c4c4c4" stroke-width="1.1"/></svg>
<div class="t" style="left:38.5px;top:528.8px;font-size:8.5px;color:#c0c0c0;font-family:'Liberation Serif',serif;font-style:italic;font-weight:bold">fx</div>
<svg class="a" style="left:96.5px;top:528.8px" width="10" height="9" viewBox="0 0 10 9"><circle cx="5" cy="4.5" r="3.3" fill="none" stroke="#6e6e6e" stroke-width="1.3"/><path d="M5 4.5q2-2.5 4-2" fill="none" stroke="#6e6e6e" stroke-width="1.1"/></svg>
<div class="a" style="left:111px;top:528.65px;width:54px;height:8.9px;background:#19191b;border-radius:1px"></div>
<div class="t" style="left:114px;top:529.39px;font-size:6.8px;color:#c8c8c8;">None</div>
<svg class="a" style="left:158px;top:531.5px" width="5" height="3.5" viewBox="0 0 5 3.5"><path d="M.5 .5L2.5 2.7 4.5 .5" fill="none" stroke="#999" stroke-width=".9"/></svg>
<div class="a" style="left:0px;top:549.05px;width:178px;height:1px;background:#1b1b1d;"></div>
<div class="a" style="left:56px;top:539.25px;width:9.5px;height:9.5px;background:#1e1e20;"></div>
<div class="a" style="left:66px;top:539.25px;width:9.5px;height:9.5px;background:#1e1e20;"></div>
<div class="a" style="left:76px;top:539.25px;width:9.5px;height:9.5px;background:#1e1e20;"></div>
<svg class="a" style="left:8px;top:540.2px" width="10" height="8" viewBox="0 0 10 8"><path d="M1 6.5h8.5Q8 5.3 7 5.3 6.5 3.5 5.2 3.5T3.3 5.3Q2 5.3 1 6.5z" fill="#b8b8b8"/></svg>
<svg class="a" style="left:28px;top:539.7px" width="9" height="9" viewBox="0 0 9 9"><path d="M1.5 8L7.5 1" stroke="#c4c4c4" stroke-width="1.1"/></svg>
<div class="t" style="left:38.5px;top:539.7px;font-size:8.5px;color:#c0c0c0;font-family:'Liberation Serif',serif;font-style:italic;font-weight:bold">fx</div>
<svg class="a" style="left:96.5px;top:539.7px" width="10" height="9" viewBox="0 0 10 9"><circle cx="5" cy="4.5" r="3.3" fill="none" stroke="#6e6e6e" stroke-width="1.3"/><path d="M5 4.5q2-2.5 4-2" fill="none" stroke="#6e6e6e" stroke-width="1.1"/></svg>
<div class="a" style="left:111px;top:539.55px;width:54px;height:8.9px;background:#19191b;border-radius:1px"></div>
<div class="t" style="left:114px;top:540.29px;font-size:6.8px;color:#c8c8c8;">None</div>
<svg class="a" style="left:158px;top:542.4px" width="5" height="3.5" viewBox="0 0 5 3.5"><path d="M.5 .5L2.5 2.7 4.5 .5" fill="none" stroke="#999" stroke-width=".9"/></svg>
<div class="a" style="left:0px;top:559.95px;width:178px;height:1px;background:#1b1b1d;"></div>
<div class="a" style="left:56px;top:550.15px;width:9.5px;height:9.5px;background:#1e1e20;"></div>
<div class="a" style="left:66px;top:550.15px;width:9.5px;height:9.5px;background:#1e1e20;"></div>
<div class="a" style="left:76px;top:550.15px;width:9.5px;height:9.5px;background:#1e1e20;"></div>
<svg class="a" style="left:8px;top:551.1px" width="10" height="8" viewBox="0 0 10 8"><path d="M1 7h8.5q-1-1.5-2.3-1.5 0-3.5-2-3.5t-2 3.5Q2 5.5 1 7z" fill="#d8d8d8"/></svg>
<svg class="a" style="left:20px;top:552.1px" width="7" height="7" viewBox="0 0 7 7"><path d="M3.5 .5l3 3-3 3-3-3z" fill="none" stroke="#555" stroke-width="1"/></svg>
<svg class="a" style="left:76px;top:551.1px" width="10" height="8" viewBox="0 0 10 8"><ellipse cx="3.5" cy="3" rx="3" ry="2" transform="rotate(30 3.5 3)" fill="#888"/><ellipse cx="6.5" cy="5" rx="3" ry="2" transform="rotate(30 6.5 5)" fill="#888"/></svg>
<svg class="a" style="left:28px;top:550.6px" width="9" height="9" viewBox="0 0 9 9"><path d="M1.5 8L7.5 1" stroke="#c4c4c4" stroke-width="1.1"/></svg>
<div class="t" style="left:38.5px;top:550.6px;font-size:8.5px;color:#c0c0c0;font-family:'Liberation Serif',serif;font-style:italic;font-weight:bold">fx</div>
<svg class="a" style="left:96.5px;top:550.6px" width="10" height="9" viewBox="0 0 10 9"><circle cx="5" cy="4.5" r="3.3" fill="none" stroke="#6e6e6e" stroke-width="1.3"/><path d="M5 4.5q2-2.5 4-2" fill="none" stroke="#6e6e6e" stroke-width="1.1"/></svg>
<div class="a" style="left:111px;top:550.45px;width:54px;height:8.9px;background:#19191b;border-radius:1px"></div>
<div class="t" style="left:114px;top:551.19px;font-size:6.8px;color:#c8c8c8;">None</div>
<svg class="a" style="left:158px;top:553.3px" width="5" height="3.5" viewBox="0 0 5 3.5"><path d="M.5 .5L2.5 2.7 4.5 .5" fill="none" stroke="#999" stroke-width=".9"/></svg>
<div class="a" style="left:0px;top:570.85px;width:178px;height:1px;background:#1b1b1d;"></div>
<div class="a" style="left:56px;top:561.05px;width:9.5px;height:9.5px;background:#1e1e20;"></div>
<div class="a" style="left:66px;top:561.05px;width:9.5px;height:9.5px;background:#1e1e20;"></div>
<div class="a" style="left:76px;top:561.05px;width:9.5px;height:9.5px;background:#1e1e20;"></div>
<svg class="a" style="left:8px;top:562.0px" width="10" height="8" viewBox="0 0 10 8"><path d="M1 6.5h8.5Q8 5.3 7 5.3 6.5 3.5 5.2 3.5T3.3 5.3Q2 5.3 1 6.5z" fill="#b8b8b8"/></svg>
<svg class="a" style="left:28px;top:561.5px" width="9" height="9" viewBox="0 0 9 9"><path d="M1.5 8L7.5 1" stroke="#c4c4c4" stroke-width="1.1"/></svg>
<div class="t" style="left:38.5px;top:561.5px;font-size:8.5px;color:#c0c0c0;font-family:'Liberation Serif',serif;font-style:italic;font-weight:bold">fx</div>
<svg class="a" style="left:96.5px;top:561.5px" width="10" height="9" viewBox="0 0 10 9"><circle cx="5" cy="4.5" r="3.3" fill="none" stroke="#6e6e6e" stroke-width="1.3"/><path d="M5 4.5q2-2.5 4-2" fill="none" stroke="#6e6e6e" stroke-width="1.1"/></svg>
<div class="a" style="left:111px;top:561.35px;width:54px;height:8.9px;background:#19191b;border-radius:1px"></div>
<div class="t" style="left:114px;top:562.09px;font-size:6.8px;color:#c8c8c8;">None</div>
<svg class="a" style="left:158px;top:564.2px" width="5" height="3.5" viewBox="0 0 5 3.5"><path d="M.5 .5L2.5 2.7 4.5 .5" fill="none" stroke="#999" stroke-width=".9"/></svg>
<div class="a" style="left:111px;top:572.25px;width:54px;height:6px;background:#19191b;"></div>
<div class="t" style="left:114px;top:572.99px;font-size:6.8px;color:#c8c8c8;">None</div>
<div class="t" style="left:38.5px;top:572.4px;font-size:8.5px;color:#c0c0c0;font-family:'Liberation Serif',serif;font-style:italic;font-weight:bold">fx</div>
<svg class="a" style="left:8px;top:572.9px" width="10" height="5" viewBox="0 0 10 5"><path d="M1 7h8.5q-1-1.5-2.3-1.5 0-3.5-2-3.5t-2 3.5Q2 5.5 1 7z" fill="#d8d8d8"/></svg>
<svg class="a" style="left:20px;top:573.9px" width="7" height="4" viewBox="0 0 7 4"><path d="M3.5 .5l3 3-3 3-3-3z" fill="none" stroke="#888" stroke-width="1"/></svg>
<svg class="a" style="left:28px;top:572.4px" width="9" height="6" viewBox="0 0 9 6"><path d="M1.5 8L7.5 1" stroke="#c4c4c4" stroke-width="1.1"/></svg>
<svg class="a" style="left:96.5px;top:572.4px" width="10" height="6" viewBox="0 0 10 6"><circle cx="5" cy="4.5" r="3.3" fill="none" stroke="#6e6e6e" stroke-width="1.3"/></svg>
<div class="a" style="left:178px;top:450px;width:3px;height:126px;background:#19191b;"></div>
<div class="a" style="left:181px;top:450px;width:520px;height:126px;background:#1f1f21;"></div>
<div class="a" style="left:184px;top:452.5px;width:504px;height:4.5px;background:#6c6c6c;"></div>
<div class="a" style="left:179.5px;top:451.8px;width:3.8px;height:6.8px;background:#3f86e8;border-radius:1.5px"></div>
<div class="a" style="left:686.5px;top:451.5px;width:3px;height:6.5px;background:#3f86e8;border-radius:1.5px"></div>
<div class="t" style="left:178.5px;width:20px;text-align:center;top:459.6px;font-size:6.8px;color:#9c9c9c">00s</div>
<div class="t" style="left:207.4px;width:20px;text-align:center;top:459.6px;font-size:6.8px;color:#9c9c9c">01s</div>
<div class="a" style="left:216.9px;top:468px;width:1px;height:2px;background:#9c9c9c;"></div>
<div class="t" style="left:240.8px;width:20px;text-align:center;top:459.6px;font-size:6.8px;color:#9c9c9c">02s</div>
<div class="a" style="left:250.3px;top:468px;width:1px;height:2px;background:#9c9c9c;"></div>
<div class="t" style="left:274.2px;width:20px;text-align:center;top:459.6px;font-size:6.8px;color:#9c9c9c">03s</div>
<div class="a" style="left:283.7px;top:468px;width:1px;height:2px;background:#9c9c9c;"></div>
<div class="t" style="left:307.6px;width:20px;text-align:center;top:459.6px;font-size:6.8px;color:#9c9c9c">04s</div>
<div class="a" style="left:317.1px;top:468px;width:1px;height:2px;background:#9c9c9c;"></div>
<div class="t" style="left:341.0px;width:20px;text-align:center;top:459.6px;font-size:6.8px;color:#9c9c9c">05s</div>
<div class="a" style="left:350.5px;top:468px;width:1px;height:2px;background:#9c9c9c;"></div>
<div class="t" style="left:374.4px;width:20px;text-align:center;top:459.6px;font-size:6.8px;color:#9c9c9c">06s</div>
<div class="a" style="left:383.9px;top:468px;width:1px;height:2px;background:#9c9c9c;"></div>
<div class="t" style="left:407.8px;width:20px;text-align:center;top:459.6px;font-size:6.8px;color:#9c9c9c">07s</div>
<div class="a" style="left:417.3px;top:468px;width:1px;height:2px;background:#9c9c9c;"></div>
<div class="t" style="left:441.2px;width:20px;text-align:center;top:459.6px;font-size:6.8px;color:#9c9c9c">08s</div>
<div class="a" style="left:450.7px;top:468px;width:1px;height:2px;background:#9c9c9c;"></div>
<div class="t" style="left:474.6px;width:20px;text-align:center;top:459.6px;font-size:6.8px;color:#9c9c9c">09s</div>
<div class="a" style="left:484.1px;top:468px;width:1px;height:2px;background:#9c9c9c;"></div>
<div class="t" style="left:508.0px;width:20px;text-align:center;top:459.6px;font-size:6.8px;color:#9c9c9c">10s</div>
<div class="a" style="left:517.5px;top:468px;width:1px;height:2px;background:#9c9c9c;"></div>
<div class="t" style="left:541.4px;width:20px;text-align:center;top:459.6px;font-size:6.8px;color:#9c9c9c">11s</div>
<div class="a" style="left:550.9px;top:468px;width:1px;height:2px;background:#9c9c9c;"></div>
<div class="t" style="left:574.8px;width:20px;text-align:center;top:459.6px;font-size:6.8px;color:#9c9c9c">12s</div>
<div class="a" style="left:584.3px;top:468px;width:1px;height:2px;background:#9c9c9c;"></div>
<div class="t" style="left:608.2px;width:20px;text-align:center;top:459.6px;font-size:6.8px;color:#9c9c9c">13s</div>
<div class="a" style="left:617.7px;top:468px;width:1px;height:2px;background:#9c9c9c;"></div>
<div class="t" style="left:641.6px;width:20px;text-align:center;top:459.6px;font-size:6.8px;color:#9c9c9c">14s</div>
<div class="a" style="left:651.1px;top:468px;width:1px;height:2px;background:#9c9c9c;"></div>
<div class="t" style="left:675.0px;width:20px;text-align:center;top:459.6px;font-size:6.8px;color:#9c9c9c">15s</div>
<div class="a" style="left:684.5px;top:468px;width:1px;height:2px;background:#9c9c9c;"></div>
<div class="a" style="left:184px;top:471.5px;width:502px;height:9.5px;background:#686868;"></div>
<div class="a" style="left:179.8px;top:471.5px;width:4px;height:9.5px;background:#3f86e8;border-radius:1px"></div>
<div class="a" style="left:686px;top:471.5px;width:2.5px;height:9.5px;background:#3f86e8;border-radius:1px"></div>
<div class="a" style="left:184px;top:481.2px;width:147px;height:3.2px;background:repeating-linear-gradient(90deg,#2b8c38 0,#2b8c38 4px,#1d5526 4px,#1d5526 5.5px);"></div>
<div class="a" style="left:184.5px;top:484.5px;width:500.5px;height:92px;background:#3d3d49;"></div>
<div class="a" style="left:184.5px;top:484.55px;width:500.5px;height:9.700000000000001px;background:#85839b;"></div>
<div class="a" style="left:184.5px;top:495.45px;width:500.5px;height:9.700000000000001px;background:#85839b;"></div>
<div class="a" style="left:184.5px;top:506.35px;width:500.5px;height:9.700000000000001px;background:#85839b;"></div>
<div class="a" style="left:184.5px;top:517.25px;width:500.5px;height:9.700000000000001px;background:#85839b;"></div>
<div class="a" style="left:184.5px;top:528.15px;width:500.5px;height:9.700000000000001px;background:#85839b;"></div>
<div class="a" style="left:184.5px;top:539.05px;width:500.5px;height:9.700000000000001px;background:#85839b;"></div>
<div class="a" style="left:184.5px;top:549.95px;width:500.5px;height:9.700000000000001px;background:#ada341;"></div>
<div class="a" style="left:184.5px;top:560.85px;width:500.5px;height:9.700000000000001px;background:#85839b;"></div>
<div class="a" style="left:184.5px;top:571.75px;width:12px;height:8px;background:#4a4a4c;"></div>
<div class="a" style="left:196.5px;top:571.75px;width:492px;height:8px;background:#467e4c;"></div>
<div class="a" style="left:264.9px;top:466px;width:1px;height:110px;background:#4077c4;"></div>
<svg class="a" style="left:261.5px;top:460.5px" width="8" height="9" viewBox="0 0 8 9"><path d="M.5 .5h7v5L4 8.5.5 5.5z" fill="#3f86e8"/><path d="M2.5 2.5h3v2.5L4 6 2.5 5z" fill="#1a3f7a"/></svg>
<svg class="a" style="left:690px;top:471.5px" width="9" height="10" viewBox="0 0 9 10"><path d="M.5 .5h8v5L4.5 9.5.5 5.5z" fill="#d8d8d8"/></svg>
<svg class="a" style="left:689.5px;top:484.5px" width="10" height="9" viewBox="0 0 10 9"><circle cx="6" cy="5" r="3.5" fill="#cfcfcf"/><path d="M0 3l4-2v4z" fill="#cfcfcf"/></svg>
<div class="a" style="left:700.5px;top:432px;width:2.5px;height:144px;background:#19191b;"></div>
<div class="t" style="left:712px;top:436.28px;font-size:7px;color:#cdcdcd;">Paragraph</div>
<div class="t" style="left:750.5px;top:435.7px;font-size:8px;color:#aaa;">≡</div>
<svg class="a" style="left:711px;top:454.5px" width="9" height="9" viewBox="0 0 9 9"><rect x="0" y="0.0" width="9" height="1.2" fill="#b8b8b8"/><rect x="0" y="2.4" width="7" height="1.2" fill="#b8b8b8"/><rect x="0" y="4.8" width="9" height="1.2" fill="#b8b8b8"/><rect x="0" y="7.199999999999999" width="6" height="1.2" fill="#b8b8b8"/></svg>
<div class="a" style="left:725.5px;top:453.5px;width:12px;height:10.5px;background:#173f7c;border-radius:1px"></div>
<svg class="a" style="left:727px;top:454.5px" width="9" height="9" viewBox="0 0 9 9"><rect x="0.0" y="0.0" width="9" height="1.2" fill="#4d86d8"/><rect x="1.0" y="2.4" width="7" height="1.2" fill="#4d86d8"/><rect x="0.0" y="4.8" width="9" height="1.2" fill="#4d86d8"/><rect x="1.0" y="7.199999999999999" width="7" height="1.2" fill="#4d86d8"/></svg>
<svg class="a" style="left:742.5px;top:454.5px" width="9" height="9" viewBox="0 0 9 9"><rect x="0" y="0.0" width="9" height="1.2" fill="#b8b8b8"/><rect x="2" y="2.4" width="7" height="1.2" fill="#b8b8b8"/><rect x="0" y="4.8" width="9" height="1.2" fill="#b8b8b8"/><rect x="3" y="7.199999999999999" width="6" height="1.2" fill="#b8b8b8"/></svg>
<svg class="a" style="left:761px;top:454.5px" width="9" height="9" viewBox="0 0 9 9"><rect x="0" y="0.0" width="9" height="1.2" fill="#b8b8b8"/><rect x="0" y="2.4" width="9" height="1.2" fill="#b8b8b8"/><rect x="0" y="4.8" width="9" height="1.2" fill="#b8b8b8"/><rect x="0" y="7.199999999999999" width="5" height="1.2" fill="#b8b8b8"/></svg>
<svg class="a" style="left:776.5px;top:454.5px" width="9" height="9" viewBox="0 0 9 9"><rect x="0.0" y="0.0" width="9" height="1.2" fill="#b8b8b8"/><rect x="0.0" y="2.4" width="9" height="1.2" fill="#b8b8b8"/><rect x="0.0" y="4.8" width="9" height="1.2" fill="#b8b8b8"/><rect x="2.0" y="7.199999999999999" width="5" height="1.2" fill="#b8b8b8"/></svg>
<svg class="a" style="left:793px;top:454.5px" width="9" height="9" viewBox="0 0 9 9"><rect x="0" y="0.0" width="9" height="1.2" fill="#b8b8b8"/><rect x="0" y="2.4" width="9" height="1.2" fill="#b8b8b8"/><rect x="0" y="4.8" width="9" height="1.2" fill="#b8b8b8"/><rect x="4" y="7.199999999999999" width="5" height="1.2" fill="#b8b8b8"/></svg>
<svg class="a" style="left:811.5px;top:454.5px" width="9" height="9" viewBox="0 0 9 9"><rect x="0" y="0.0" width="9" height="1.2" fill="#b8b8b8"/><rect x="0" y="2.4" width="9" height="1.2" fill="#b8b8b8"/><rect x="0" y="4.8" width="9" height="1.2" fill="#b8b8b8"/><rect x="0" y="7.199999999999999" width="9" height="1.2" fill="#b8b8b8"/></svg>
<div class="a" style="left:708px;top:468px;width:118px;height:1px;background:#2c2c2f;"></div>
<svg class="a" style="left:709px;top:471.3px" width="10" height="10" viewBox="0 0 10 10"><rect x="4" y="0" width="6" height="1.2" fill="#ccc"/><rect x="4" y="2.5" width="6" height="1.2" fill="#ccc"/><rect x="4" y="5" width="6" height="1.2" fill="#ccc"/><rect x="4" y="7.5" width="6" height="1.2" fill="#ccc"/><path d="M0 2.5l3 2-3 2z" fill="#ccc"/></svg>
<div class="t" style="left:722px;top:471.98px;font-size:7px;color:#2b68b8;">0</div>
<div class="t" style="left:728px;top:472.28px;font-size:7px;color:#707070;">px</div>
<svg class="a" style="left:754px;top:471.3px" width="10" height="10" viewBox="0 0 10 10"><rect x="4" y="0" width="6" height="1.2" fill="#ccc"/><rect x="4" y="2.5" width="6" height="1.2" fill="#ccc"/><rect x="4" y="5" width="6" height="1.2" fill="#ccc"/><rect x="4" y="7.5" width="6" height="1.2" fill="#ccc"/><path d="M0 2.5l3 2-3 2z" fill="#ccc"/></svg>
<div class="t" style="left:768px;top:471.98px;font-size:7px;color:#2b68b8;">0</div>
<div class="t" style="left:774px;top:472.28px;font-size:7px;color:#707070;">px</div>
<svg class="a" style="left:797px;top:471.3px" width="10" height="10" viewBox="0 0 10 10"><rect x="4" y="0" width="6" height="1.2" fill="#ccc"/><rect x="4" y="2.5" width="6" height="1.2" fill="#ccc"/><rect x="4" y="5" width="6" height="1.2" fill="#ccc"/><rect x="4" y="7.5" width="6" height="1.2" fill="#ccc"/><path d="M0 2.5l3 2-3 2z" fill="#ccc"/></svg>
<div class="t" style="left:810px;top:471.98px;font-size:7px;color:#2b68b8;">0</div>
<div class="t" style="left:816px;top:472.28px;font-size:7px;color:#707070;">px</div>
<svg class="a" style="left:709px;top:484.7px" width="10" height="10" viewBox="0 0 10 10"><rect x="4" y="0" width="6" height="1.2" fill="#ccc"/><rect x="4" y="2.5" width="6" height="1.2" fill="#ccc"/><rect x="4" y="5" width="6" height="1.2" fill="#ccc"/><rect x="4" y="7.5" width="6" height="1.2" fill="#ccc"/><path d="M0 2.5l3 2-3 2z" fill="#ccc"/></svg>
<div class="t" style="left:722px;top:485.38px;font-size:7px;color:#2b68b8;">0</div>
<div class="t" style="left:728px;top:485.68px;font-size:7px;color:#707070;">px</div>
<svg class="a" style="left:754px;top:484.7px" width="10" height="10" viewBox="0 0 10 10"><rect x="4" y="0" width="6" height="1.2" fill="#ccc"/><rect x="4" y="2.5" width="6" height="1.2" fill="#ccc"/><rect x="4" y="5" width="6" height="1.2" fill="#ccc"/><rect x="4" y="7.5" width="6" height="1.2" fill="#ccc"/><path d="M0 2.5l3 2-3 2z" fill="#ccc"/></svg>
<div class="t" style="left:768px;top:485.38px;font-size:7px;color:#2b68b8;">0</div>
<div class="t" style="left:774px;top:485.68px;font-size:7px;color:#707070;">px</div>
<svg class="a" style="left:797px;top:485px" width="11" height="10" viewBox="0 0 11 10"><path d="M0 2.5l2.5 2L0 6.5z" fill="#ddd"/><path d="M5 0h5v1.2H9v8.5H7.8V1.2H6.8v8.5H5.6V5Q3.5 5 3.5 2.5T5 0z" fill="#ddd"/></svg>
<div class="a" style="left:810.5px;top:484.5px;width:12.5px;height:10.5px;background:#13305f;border-radius:1.5px"></div>
<svg class="a" style="left:811px;top:485px" width="12" height="10" viewBox="0 0 12 10"><path d="M12 2.5l-2.5 2 2.5 2z" fill="#4a88e0"/><path d="M3 0h5v1.2H7v8.5H5.8V1.2H4.8v8.5H3.6V5Q1.5 5 1.5 2.5T3 0z" fill="#4a88e0"/></svg>
<div class="a" style="left:878px;top:0px;width:15px;height:576px;background:#1b1b1b;"></div>
<div class="a" style="left:892.5px;top:0px;width:131.5px;height:576px;background:#fff;"></div>
<div class="a" style="left:893px;top:60.5px;width:131px;height:43.5px;background:#e4e4e4;"></div>
<div class="a" style="left:893px;top:12.5px;width:131px;height:1px;background:#dcdcdc;"></div>
<div class="t" style="left:958px;top:31.7px;font-size:13.4px;line-height:16px;color:#3a3a3a;">Information</div>
<svg class="a" style="left:917px;top:68px" width="27" height="28" viewBox="0 0 27 28"><rect width="27" height="28" rx="6" fill="#f7f7f7"/><ellipse cx="13.5" cy="11" rx="6" ry="7.5" fill="#ececec" stroke="#dcdcdc" stroke-width="1"/><path d="M8 13q5.5 9 11 0v5q-5.5 6-11 0z" fill="#dedede"/><path d="M3 28q2-7 10.5-7t10.5 7z" fill="#e6e6e6"/></svg>
<div class="t" style="left:958px;top:74.7px;font-size:13.4px;line-height:16px;color:#3a3a3a;">Nour Mous</div>
<div class="a" style="left:917px;top:112px;width:27px;height:27px;border-radius:6.5px;background:#7f1fa8;color:#fff;font-weight:bold;font-size:15px;line-height:27px;text-align:center;">F</div>
<div class="t" style="left:958px;top:118.7px;font-size:13.4px;line-height:16px;color:#3a3a3a;">Fatima Atw</div>
<div class="a" style="left:917px;top:155.5px;width:27px;height:27px;border-radius:6.5px;background:#27a862;color:#fff;font-weight:bold;font-size:11.5px;line-height:27px;text-align:center;">NS</div>
<div class="t" style="left:958px;top:162.2px;font-size:13.4px;line-height:16px;color:#3a3a3a;">nancy salar</div>
<div class="a" style="left:917px;top:199px;width:27px;height:27px;border-radius:6.5px;background:#d4530e;color:#fff;font-weight:bold;font-size:12.5px;line-height:27px;text-align:center;">N</div>
<div class="t" style="left:958px;top:205.7px;font-size:13.4px;line-height:16px;color:#3a3a3a;">NOUR.FAR</div>
<div class="a" style="left:917px;top:243px;width:27px;height:27px;border-radius:6.5px;background:#1a9c86;color:#fff;font-weight:bold;font-size:12.5px;line-height:27px;text-align:center;">Z</div>
<div class="t" style="left:958px;top:249.2px;font-size:13.4px;line-height:16px;color:#3a3a3a;">Zeinab</div>
<svg class="a" style="left:917px;top:286.5px" width="27" height="27" viewBox="0 0 27 27"><rect width="27" height="27" rx="6.5" fill="#f1dfcb"/><rect x="3.5" y="3.5" width="20" height="4" rx="1" fill="#8a6a4c"/><path d="M7 24q2-10 6-9 2-5 4-1 3 2 4 10z" fill="#e9e2d8"/><path d="M13 13l2-4 1 5z" fill="#a88c6e"/></svg>
<div class="t" style="left:958px;top:291px;font-size:13px;line-height:18px;color:#3a3a3a;font-family:'DejaVu Sans',sans-serif;direction:rtl">إعلام بيروت</div>
<div class="a" style="left:917px;top:330px;width:27px;height:27px;border-radius:6.5px;background:#ef9a1c;color:#fff;font-weight:bold;font-size:11px;line-height:27px;text-align:center;font-family:'DejaVu Sans',sans-serif;">ر</div>
<div class="t" style="left:958px;top:335px;font-size:13px;line-height:18px;color:#3a3a3a;font-family:'DejaVu Sans',sans-serif;direction:rtl">رولا قاسم</div>
<div class="a" style="left:917px;top:374px;width:27px;height:27px;border-radius:6.5px;background:#8c6d62;color:#fff;font-weight:bold;font-size:14px;line-height:27px;text-align:center;">f</div>
<div class="t" style="left:958px;top:378.5px;font-size:13px;line-height:18px;color:#3a3a3a;font-family:'DejaVu Sans',sans-serif;direction:rtl">فاطمة حسيكي</div>
<div class="a" style="left:917px;top:417.5px;width:27px;height:27px;border-radius:6.5px;background:#cc3a2c;color:#fff;font-weight:bold;font-size:11px;line-height:27px;text-align:center;font-family:'DejaVu Sans',sans-serif;">م</div>
<div class="t" style="left:958px;top:422px;font-size:13px;line-height:18px;color:#3a3a3a;font-family:'DejaVu Sans',sans-serif;direction:rtl">مريم إدريس</div>
<svg class="a" style="left:840px;top:0" width="184" height="230" viewBox="840 0 184 230"><path d="M1024 0H861Q847 8 847 17V34Q847 37 850 39.3L867 52 1024 211z" fill="#fff" fill-opacity=".79"/></svg>
<svg class="a" style="left:880px;top:0" width="120" height="30" viewBox="880 0 120 30">
<path d="M886 -2L908.3 24.2Q909.3 25.4 911 25.4H961.5Q963.2 25.4 964.2 24.2L985 2.5V-2" fill="#fff" stroke="#6b3f94" stroke-width="2" stroke-linejoin="round"/>
<path d="M893 0L908.7 16.8 923 2.5 920.5 0H913L910.5 2.5 908.5 4.5 904 0z" fill="#d8b72e"/>
<path d="M927 0H941.5L943 1.5 927.5 17 921.5 11 930 2.5z" fill="#dcae28"/>
<path d="M927 8.5l5 4-4 4-4.5-4z" fill="#e89c1c"/>
<path d="M916.5 16.5l4.5 4.5h-9z" fill="#cdb52a"/>
<path d="M946.3 7L961 22H949.5L946.3 18.5 943 22H931.3z" fill="#2aa78a"/>
<path d="M946.3 7L961 22H953L946.3 14.5z" fill="#1f957c"/>
<g fill="none" stroke="#6b3f94" stroke-width="1.7" stroke-linecap="round" opacity=".85"><path d="M955 0q-3 5 1 9"/><path d="M958.5 0q-2.5 6 3.5 11"/><path d="M962 2q-1 7 7 10.5"/><path d="M964 8q4 5 10 2"/><path d="M975.5 0q2 5-4 9.5"/><path d="M972 0q1 4-3 6.5"/><path d="M978 2q0 6-5 10"/></g>
</svg>
<div class="t" id="logotxt" style="left:873px;top:32.7px;width:125px;height:26px;overflow:visible;direction:rtl"><span style="display:inline-block;transform-origin:100% 50%;transform:scaleX(.735);font-size:16px;line-height:26px;color:#70429a;font-weight:bold;-webkit-text-stroke:.55px #70429a;font-family:'DejaVu Sans',sans-serif;">كشافة الإمام المهدي</span></div>
</div>
</body></html>
